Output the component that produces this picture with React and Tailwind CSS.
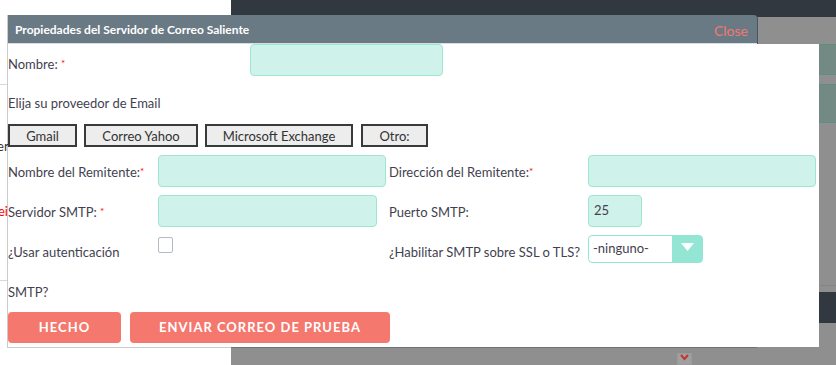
export default function App() {
  const label = "text-[13px] leading-[16px] text-[#433f50]";
  const input = "h-[32px] rounded-[4px] border border-[#9fe5d4] bg-[#cff2ea]";
  const star = <span className="text-[10px] text-[#ff0000] align-top relative top-[-1px]">*</span>;
  return (
    <div className="relative w-[836px] h-[365px] overflow-hidden flex [font-family:Lato,'Open_Sans',sans-serif]">
      {/* background: left white column */}
      <div className="w-[231px] bg-white flex flex-col">
        <div className="mt-[84px] h-px w-[7px] bg-[#d9d9d9]" />
        <div className="mt-[53px] h-[16px] text-[13px] leading-[16px] text-[#333] whitespace-nowrap ml-[-6px]">ier</div>
        <div className="mt-[49px] h-[16px] text-[13px] leading-[16px] text-[#ff0000] whitespace-nowrap ml-[-2px]">ei</div>
        <div className="mt-[61px] h-px w-[7px] bg-[#d9d9d9]" />
      </div>
      {/* background: right gray column */}
      <div className="flex-1 bg-[#8f8f8f] flex flex-col">
        <div className="h-[21px] bg-[#32383f]" />
        <div className="pl-[588px] flex flex-col">
          <div className="mt-[27px] h-[31px] bg-[#728a83] border-y border-[#5d9080]" />
          <div className="mt-[9px] h-[39px] bg-[#728a83] border-y border-[#5d9080]" />
          <div className="mt-[162px] h-px bg-[#858585]" />
          <div className="mt-[6px] h-[31px] bg-[#32383f]" />
        </div>
        <div className="pl-[446px] mt-[30px]">
          <div className="w-[15px] h-[12px] border border-[#9a9a9a] bg-[#a0a0a0] flex items-start justify-center">
            <svg width="11" height="8" viewBox="0 0 11 8"><path d="M2 1 L5.5 5 L9 1" stroke="#c0392b" strokeWidth="2" fill="none" /></svg>
          </div>
        </div>
      </div>

      {/* dialog */}
      <div className="absolute left-[7px] top-[15px] w-[750px] border-l border-b border-[rgba(0,0,0,0.2)]">
        <div className="h-[29px] bg-[#6a7a84] rounded-tr-[4px] border-b border-[#d7dde0] flex items-center justify-between pl-[7px] pr-[9px] shadow-[1px_0_0_#4a555c]">
          <span className="text-[12px] font-bold text-white mt-[1px]">Propiedades del Servidor de Correo Saliente</span>
          <span className="text-[14px] text-[#f3786f] mt-[3px]">Close</span>
        </div>
        <div className="w-[811px] h-[303px] bg-white flex flex-col">
          {/* Nombre */}
          <div className="flex items-center h-[32px]">
            <div className={`${label} w-[242px] mt-[8px]`}>Nombre: {star}</div>
            <div className={`${input} w-[193px]`} />
          </div>
          <div className={`${label} mt-[19px]`}>Elija su proveedor de Email</div>
          <div className="flex mt-[13px] gap-[7px]">
            <button className="h-[23px] w-[69px] border-2 border-[#3a3a3a] bg-[#ededed] text-[13px] leading-[16px] text-[#333]">Gmail</button>
            <button className="h-[23px] w-[114px] border-2 border-[#3a3a3a] bg-[#ededed] text-[13px] leading-[16px] text-[#333]">Correo Yahoo</button>
            <button className="h-[23px] w-[148px] border-2 border-[#3a3a3a] bg-[#ededed] text-[13px] leading-[16px] text-[#333]">Microsoft Exchange</button>
            <button className="h-[23px] w-[67px] ml-[1px] border-2 border-[#3a3a3a] bg-[#ededed] text-[13px] leading-[16px] text-[#333]">Otro:</button>
          </div>
          {/* form grid */}
          <div className="grid grid-cols-[150px_231px_199px_228px] mt-[8px] gap-y-[8px] items-center">
            <div className={`${label} mt-[2px]`}>Nombre del Remitente:{star}</div>
            <div className={`${input} w-[228px]`} />
            <div className={`${label} mt-[2px]`}>Dirección del Remitente:{star}</div>
            <div className={`${input} w-[228px]`} />

            <div className={`${label} mt-[2px]`}>Servidor SMTP: {star}</div>
            <div className={`${input} w-[219px]`} />
            <div className={`${label} mt-[2px]`}>Puerto SMTP:</div>
            <div className={`${input} w-[54px] flex items-center pl-[5px] text-[13px] text-[#433f50]`}>25</div>

            <div className={`${label} mt-[6px]`}>¿Usar autenticación</div>
            <div className="h-[28px] flex items-center">
              <div className="w-[15px] h-[16px] border border-[#b3bcc4] rounded-[2px] bg-white mt-[-8px]" />
            </div>
            <div className={`${label} mt-[6px]`}>¿Habilitar SMTP sobre SSL o TLS?</div>
            <div className="h-[28px] w-[115px] rounded-[4px] border border-[#93e6d3] bg-white flex">
              <div className="flex-1 pl-[4px] flex items-center text-[13px] text-[#433f50]">-ninguno-</div>
              <div className="w-[30px] bg-[#93e6d3] flex items-start justify-center pt-[7px]">
                <svg width="13" height="8" viewBox="0 0 13 8"><path d="M0 0 H13 L6.5 8 Z" fill="#fff" /></svg>
              </div>
            </div>
          </div>
          <div className={`${label} mt-[21px]`}>SMTP?</div>
          <div className="flex gap-[9px] mt-[12px]">
            <button className="h-[31px] w-[113px] rounded-[4px] bg-[#f5786f] text-white text-[13px] font-bold tracking-[1px]">HECHO</button>
            <button className="h-[31px] w-[260px] rounded-[4px] bg-[#f5786f] text-white text-[13px] font-bold tracking-[1px]">ENVIAR CORREO DE PRUEBA</button>
          </div>
        </div>
      </div>
    </div>
  );
}
